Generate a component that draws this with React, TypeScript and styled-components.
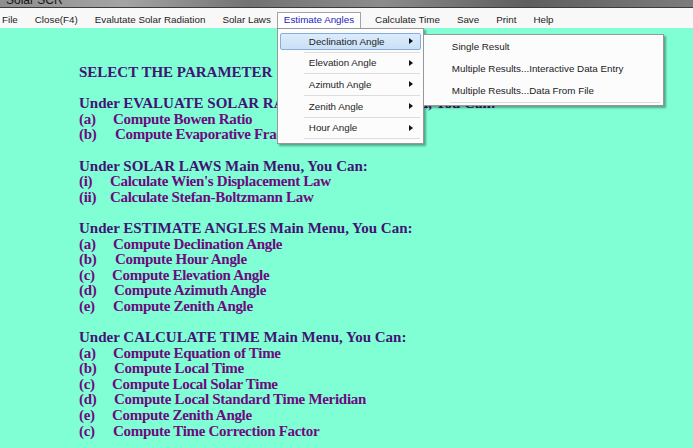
import React from 'react';
import styled, {createGlobalStyle} from 'styled-components';

const GlobalStyle = createGlobalStyle`
  html, body {
    margin: 0;
    padding: 0;
    overflow: hidden;
    background: #80ffd4;
  }
`;

const Screen = styled.div`
  display: flex;
  flex-direction: column;
  width: 693px;
  height: 448px;
  background: #80ffd4;
  overflow: hidden;
`;

const TitleBar = styled.div`
  flex: none;
  height: 7px;
  border-bottom: 1px solid #3c3c3c;
  overflow: hidden;
  display: flex;
  align-items: flex-end;
  padding-left: 6px;
  background: linear-gradient(
    90deg,
    #8e8e8e 0%,
    #a4a4a4 18%,
    #727272 36%,
    #8c8c8c 55%,
    #5e5e5e 76%,
    #7c7c7c 100%
  );
  font-family: 'Liberation Sans', Arial, sans-serif;
  font-size: 12px;
  line-height: 14px;
  color: #151515;
  white-space: nowrap;
`;

const MenuBar = styled.div`
  flex: none;
  height: 20px;
  display: flex;
  align-items: flex-end;
  gap: 3px;
  background: #f8f8f8;
  font-family: 'Liberation Sans', Arial, sans-serif;
  font-size: 9.8px;
  color: #1c1c1c;
  position: relative;
  z-index: 2;
  & > :first-child {
    margin-left: -5px;
  }
`;

const MenuItem = styled.div<{$active?: boolean}>`
  position: relative;
  height: 16px;
  box-sizing: border-box;
  padding: 0 ${p => (p.$active ? 6 : 7)}px 2px;
  margin: ${p => (p.$active ? '0 4px 0 -4px' : '0')};
  display: flex;
  align-items: center;
  white-space: nowrap;
  border: ${p => (p.$active ? '1px solid #a3a3a3' : 'none')};
  border-bottom: none;
  background: ${p => (p.$active ? '#ffffff' : 'transparent')};
  color: ${p => (p.$active ? '#2323c4' : '#1c1c1c')};
`;

const Dropdown = styled.div`
  position: absolute;
  top: 100%;
  left: -1px;
  width: 147px;
  box-sizing: border-box;
  padding: 3.5px 2px 2px;
  border: 1px solid #979797;
  background: #fcfcfc;
  box-shadow: 2px 2px 2px rgba(0, 0, 0, 0.35);
  color: #1c1c1c;
  z-index: 5;
`;

const DropRow = styled.div<{$hot?: boolean}>`
  position: relative;
  height: 17px;
  box-sizing: border-box;
  margin-bottom: 2px;
  padding: 0 7px 0 28px;
  display: flex;
  align-items: center;
  justify-content: space-between;
  border: 1px solid ${p => (p.$hot ? '#86aedd' : 'transparent')};
  border-radius: 2px;
  background: ${p => (p.$hot ? 'linear-gradient(#dcecfc, #c9e0f7)' : 'transparent')};
`;

const Arrow = styled.span`
  width: 0;
  height: 0;
  border-left: 4px solid #111;
  border-top: 3.5px solid transparent;
  border-bottom: 3.5px solid transparent;
`;

const Separator = styled.div<{$inset: number}>`
  height: 1px;
  margin: 0 1px 1.7px ${p => p.$inset}px;
  background: #dcdcdc;
`;

const Submenu = styled.div`
  position: absolute;
  top: 0;
  left: calc(100% + 3px);
  width: 241px;
  box-sizing: border-box;
  padding: 1px 2px 1px;
  border: 1px solid #979797;
  background: #fcfcfc;
  box-shadow: 2px 2px 2px rgba(0, 0, 0, 0.35);
  color: #222;
`;

const SubRow = styled.div`
  height: 22px;
  padding-left: 26px;
  display: flex;
  align-items: center;
  white-space: nowrap;
`;

const Content = styled.div`
  flex: 1;
  min-height: 0;
  padding: 37px 0 0 79px;
  font-family: 'Liberation Serif', 'Times New Roman', serif;
  font-weight: bold;
  font-size: 15px;
  line-height: 15.6px;
  white-space: nowrap;
`;

const Section = styled.div`
  margin-bottom: 15.6px;
`;

const Heading = styled.div`
  color: #421274;
`;

const Line = styled.div`
  display: flex;
  color: #6c0a80;
  letter-spacing: -0.3px;
`;

const Label = styled.span<{$width: number}>`
  width: ${p => p.$width}px;
  flex: none;
`;

type Entry = [string, string, number];

const sections: {title: string; items: Entry[]}[] = [
  {
    title: 'Under EVALUATE SOLAR RADIATION Main Menu, You Can:',
    items: [
      ['(a)', 'Compute Bowen Ratio', 113],
      ['(b)', 'Compute Evaporative Fraction', 115]
    ]
  },
  {
    title: 'Under SOLAR LAWS Main Menu, You Can:',
    items: [
      ['(i)', "Calculate Wien's Displacement Law", 110],
      ['(ii)', 'Calculate Stefan-Boltzmann Law', 110]
    ]
  },
  {
    title: 'Under ESTIMATE ANGLES Main Menu, You Can:',
    items: [
      ['(a)', 'Compute Declination Angle', 113],
      ['(b)', 'Compute Hour Angle', 115],
      ['(c)', 'Compute Elevation Angle', 112],
      ['(d)', 'Compute Azimuth Angle', 114],
      ['(e)', 'Compute Zenith Angle', 113]
    ]
  },
  {
    title: 'Under CALCULATE TIME Main Menu, You Can:',
    items: [
      ['(a)', 'Compute Equation of Time', 113],
      ['(b)', 'Compute Local Time', 114],
      ['(c)', 'Compute Local Solar Time', 112],
      ['(d)', 'Compute Local Standard Time Meridian', 114],
      ['(e)', 'Compute Zenith Angle', 112],
      ['(c)', 'Compute Time Correction Factor', 113]
    ]
  }
];

const angleItems = ['Declination Angle', 'Elevation Angle', 'Azimuth Angle', 'Zenith Angle', 'Hour Angle'];
const subItems = ['Single Result', 'Multiple Results...Interactive Data Entry', 'Multiple Results...Data From File'];
const menus = ['File', 'Close(F4)', 'Evalutate Solar Radiation', 'Solar Laws', 'Estimate Angles', 'Calculate Time', 'Save', 'Print', 'Help'];

const App = () => (
  <Screen>
    <GlobalStyle />
    <TitleBar>Solar SCR</TitleBar>
    <MenuBar>
      {menus.map(m =>
        m === 'Estimate Angles' ? (
          <MenuItem key={m} $active>
            {m}
            <Dropdown>
              {angleItems.map((a, i) => (
                <React.Fragment key={a}>
                  <DropRow $hot={i === 0}>
                    {a}
                    <Arrow />
                    {i === 0 && (
                      <Submenu>
                        {subItems.map(s => (
                          <SubRow key={s}>{s}</SubRow>
                        ))}
                        <Separator $inset={24} />
                      </Submenu>
                    )}
                  </DropRow>
                  <Separator $inset={24} />
                </React.Fragment>
              ))}
            </Dropdown>
          </MenuItem>
        ) : (
          <MenuItem key={m}>{m}</MenuItem>
        )
      )}
    </MenuBar>
    <Content>
      <Section>
        <Heading>SELECT THE PARAMETER</Heading>
      </Section>
      {sections.map(s => (
        <Section key={s.title}>
          <Heading>{s.title}</Heading>
          {s.items.map(([label, text, x], i) => (
            <Line key={i}>
              <Label $width={x - 79}>{label}</Label>
              {text}
            </Line>
          ))}
        </Section>
      ))}
    </Content>
  </Screen>
);

export default App;
